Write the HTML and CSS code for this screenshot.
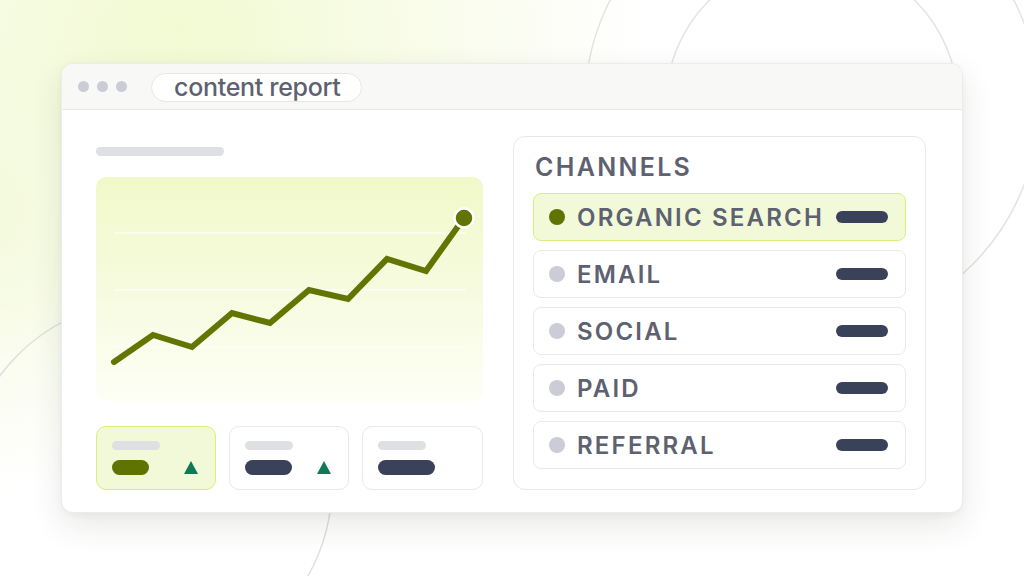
FILE: index.html
```html
<!DOCTYPE html>
<html>
<head>
<meta charset="utf-8">
<link rel="stylesheet" href="styles.css">
</head>
<body>
<div class="stage">
  <svg class="deco" width="1024" height="576" viewBox="0 0 1024 576">
    <circle cx="812" cy="104" r="227" fill="none" stroke="#e3e3df" stroke-width="1.5"/>
    <circle cx="812" cy="104" r="146" fill="none" stroke="#e3e3df" stroke-width="1.5"/>
    <circle cx="148" cy="485" r="184" fill="none" stroke="#e0e0dc" stroke-width="1.5"/>
  </svg>
  <div class="window">
    <div class="titlebar">
      <div class="dots"><span></span><span></span><span></span></div>
      <div class="tab">content report</div>
    </div>
    <div class="content">
      <div class="left">
        <div class="skel title-skel"></div>
        <div class="chart">
          <svg width="387" height="224" viewBox="0 0 387 224">
            <line x1="18" y1="56" x2="370" y2="56" stroke="#ffffff" stroke-opacity="0.75" stroke-width="1.5"/>
            <line x1="18" y1="113" x2="370" y2="113" stroke="#ffffff" stroke-opacity="0.75" stroke-width="1.5"/>
            <line x1="18" y1="170" x2="370" y2="170" stroke="#ffffff" stroke-opacity="0.6" stroke-width="1.5"/>
            <polyline points="18,185 57,158 96,170 136,136 174,146 213,113 252,122 291,82 330,94 368,41" fill="none" stroke="#617500" stroke-width="6" stroke-linecap="round" stroke-linejoin="miter"/>
            <circle cx="368" cy="41" r="9.5" fill="#617500" stroke="#ffffff" stroke-width="2.5"/>
          </svg>
        </div>
        <div class="stats">
          <div class="stat active">
            <div class="skel stat-skel"></div>
            <div class="stat-row"><span class="pill green w37"></span><span class="tri"></span></div>
          </div>
          <div class="stat">
            <div class="skel stat-skel"></div>
            <div class="stat-row"><span class="pill w47"></span><span class="tri"></span></div>
          </div>
          <div class="stat">
            <div class="skel stat-skel"></div>
            <div class="stat-row"><span class="pill w57"></span></div>
          </div>
        </div>
      </div>
      <div class="panel">
        <div class="panel-title">CHANNELS</div>
        <div class="rows">
          <div class="row active"><span class="dot"></span><span class="label">ORGANIC SEARCH</span><span class="bar"></span></div>
          <div class="row"><span class="dot"></span><span class="label">EMAIL</span><span class="bar"></span></div>
          <div class="row"><span class="dot"></span><span class="label">SOCIAL</span><span class="bar"></span></div>
          <div class="row"><span class="dot"></span><span class="label">PAID</span><span class="bar"></span></div>
          <div class="row"><span class="dot"></span><span class="label">REFERRAL</span><span class="bar"></span></div>
        </div>
      </div>
    </div>
  </div>
</div>
</body>
</html>
```

FILE: styles.css
```css
* { box-sizing: border-box; }
html, body { margin: 0; padding: 0; }
body {
  width: 1024px;
  height: 576px;
  overflow: hidden;
  font-family: Inter, "Noto Sans", sans-serif;
  background: #ffffff;
}
.stage {
  position: relative;
  width: 1024px;
  height: 576px;
  padding: 63px 61px 0 61px;
  background:
    radial-gradient(ellipse 460px 340px at 180px 30px, #f2fad2 0%, rgba(245,251,222,0.75) 45%, rgba(255,255,255,0) 100%),
    radial-gradient(ellipse 170px 280px at 0px 210px, #f4fadc 0%, rgba(255,255,255,0) 100%),
    #ffffff;
}
.deco {
  position: absolute;
  left: 0;
  top: 0;
}
.window {
  position: relative;
  width: 902px;
  height: 450px;
  background: #ffffff;
  border-radius: 12px;
  border: 1px solid #ececea;
  box-shadow: 0 12px 32px rgba(40, 44, 30, 0.11), 0 2px 6px rgba(40,44,30,0.04);
  overflow: hidden;
  display: flex;
  flex-direction: column;
}
.titlebar {
  height: 46px;
  background: #f8f8f6;
  border-bottom: 1px solid #e8e8e5;
  display: flex;
  align-items: center;
  padding-left: 16px;
  gap: 24px;
  flex-shrink: 0;
}
.dots { display: flex; gap: 8px; }
.dots span {
  width: 11px;
  height: 11px;
  border-radius: 50%;
  background: #cbccd6;
}
.tab {
  height: 29px;
  padding: 0 20px 0 22px;
  background: #ffffff;
  border: 1px solid #e6e6e3;
  border-radius: 15px;
  font-size: 25px;
  font-weight: 500;
  color: #5d6170;
  line-height: 27px;
  letter-spacing: -0.3px;
  margin-top: 1px;
}
.content {
  flex: 1;
  display: flex;
  padding: 26px 36px 24px 34px;
  gap: 30px;
}
.left {
  width: 387px;
  padding-top: 11px;
  display: flex;
  flex-direction: column;
}
.skel {
  background: #dfe0e4;
  border-radius: 5px;
}
.title-skel {
  width: 128px;
  height: 9px;
}
.chart {
  margin-top: 21px;
  height: 224px;
  border-radius: 10px;
  background: linear-gradient(180deg, #f1f9c9 0%, #f6fbdf 50%, #fdfff5 100%);
}
.chart svg { display: block; }
.stats {
  margin-top: 25px;
  display: flex;
  gap: 13px;
}
.stat {
  width: 120px;
  height: 64px;
  border: 1.5px solid #e8e8e6;
  border-radius: 10px;
  background: #ffffff;
  padding: 14px 0 0 15px;
}
.stat:last-child { width: 121px; }
.stat.active {
  background: #f1f9d8;
  border-color: #d9ef7a;
}
.stat-skel {
  width: 48px;
  height: 9px;
}
.stat-row {
  margin-top: 10px;
  display: flex;
  align-items: center;
  justify-content: space-between;
  padding-right: 17px;
}
.pill {
  display: block;
  height: 15px;
  border-radius: 8px;
  background: #3a4259;
}
.pill.green { background: #607200; }
.w37 { width: 37px; }
.w47 { width: 47px; }
.w57 { width: 57px; }
.tri {
  width: 0;
  height: 0;
  border-left: 7.5px solid transparent;
  border-right: 7.5px solid transparent;
  border-bottom: 13px solid #0f7a55;
}
.panel {
  width: 414px;
  border: 1.5px solid #e8e8e6;
  border-radius: 12px;
  padding: 14px 19px 19px 19px;
  display: flex;
  flex-direction: column;
}
.panel-title {
  font-size: 25px;
  font-weight: 600;
  color: #5d6170;
  letter-spacing: 2.3px;
  line-height: 32px;
  padding-left: 2px;
  margin-bottom: 10px;
}
.rows {
  display: flex;
  flex-direction: column;
  gap: 9px;
}
.row {
  height: 48px;
  border: 1.5px solid #e8e8e6;
  border-radius: 8px;
  background: #ffffff;
  display: flex;
  align-items: center;
  padding: 0 17px 0 15px;
}
.row.active {
  background: #f1f9d8;
  border-color: #d9ef7a;
}
.dot {
  width: 16px;
  height: 16px;
  border-radius: 50%;
  background: #cbccd6;
  flex-shrink: 0;
}
.row.active .dot { background: #607200; }
.label {
  margin-left: 12px;
  font-size: 24px;
  font-weight: 600;
  color: #5d6170;
  letter-spacing: 2.2px;
  flex: 1;
  line-height: 30px;
  padding-top: 2px;
}
.bar {
  width: 52px;
  height: 12px;
  border-radius: 6px;
  background: #3a4259;
  flex-shrink: 0;
}
```
